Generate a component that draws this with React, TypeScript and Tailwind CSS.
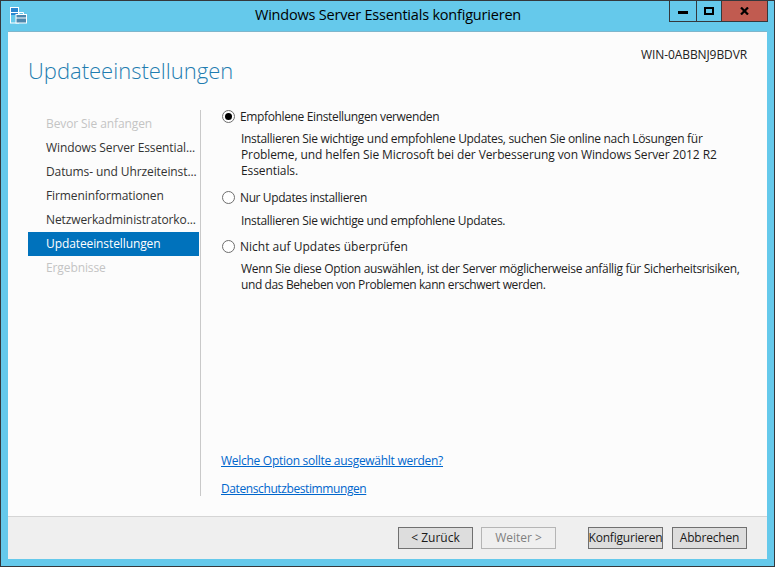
const font = { fontFamily: '"Open Sans", "Noto Sans", sans-serif' };

const schritte = [
  { name: 'Bevor Sie anfangen', status: 'aus' },
  { name: 'Windows Server Essential...', status: 'an' },
  { name: 'Datums- und Uhrzeiteinst...', status: 'an' },
  { name: 'Firmeninformationen', status: 'an' },
  { name: 'Netzwerkadministratorko...', status: 'an' },
  { name: 'Updateeinstellungen', status: 'aktiv' },
  { name: 'Ergebnisse', status: 'aus' },
];

function Radio({ checked }: { checked?: boolean }) {
  return (
    <span className="w-[13px] h-[13px] rounded-full border border-[#6e6e6e] bg-white flex items-center justify-center shrink-0">
      {checked && <span className="w-[7px] h-[7px] rounded-full bg-black" />}
    </span>
  );
}

function Knopf({ children, disabled, className }: { children: React.ReactNode; disabled?: boolean; className?: string }) {
  return (
    <button
      className={`h-[22px] w-[75px] flex items-center justify-center border text-[12px] whitespace-nowrap ${
        disabled ? 'border-[#b5b5b5] bg-[#efefef] text-[#7f7f7f]' : 'border-[#707070] bg-[#dddddd] text-[#1a1a1a]'
      } ${className ?? ''}`}
    >
      {children}
    </button>
  );
}

export default function App() {
  return (
    <div style={font} className="w-[775px] h-[567px] flex flex-col bg-[#65c9eb] border border-[#34383c] text-[12px] text-[#1e1e1e] overflow-hidden">
      {/* Titelleiste */}
      <div className="h-[30px] flex shrink-0">
        <div className="w-[30px] pl-[9px] pt-[6px]">
          <svg width="17" height="17" viewBox="0 0 17 17">
            <rect x="0.5" y="0.5" width="8" height="15.5" fill="#65c9eb" stroke="#fff" />
            <rect x="1" y="1" width="7" height="4" fill="#2a86d0" />
            <rect x="1" y="5" width="7" height="1" fill="#fff" />
            <rect x="1" y="6" width="7" height="2" fill="#2a86d0" />
            <rect x="6" y="7.5" width="10.5" height="8.5" fill="#4d87ad" stroke="#fff" />
            <path d="M9 7.5V5.5H13.5V7.5" fill="none" stroke="#fff" />
            <path d="M6 11H16.5" stroke="#fff" />
          </svg>
        </div>
        <div className="flex-1 flex justify-center pt-[4px] pl-[76px] text-[14.5px] leading-[20px] text-black tracking-[-0.2px] whitespace-nowrap">
          Windows Server Essentials konfigurieren
        </div>
        <div className="h-[21px] flex border border-t-0 border-[#34383c] mr-[6px]">
          <div className="w-[27px] flex items-center justify-center border-r border-[#34383c]">
            <span className="w-[10px] h-[3px] bg-black mt-[3px]" />
          </div>
          <div className="w-[25px] flex items-center justify-center border-r border-[#34383c]">
            <span className="w-[10px] h-[8px] border-2 border-black" />
          </div>
          <div className="w-[45px] flex items-center justify-center bg-[#c15b50]">
            <svg width="9" height="8" viewBox="0 0 9 8">
              <path d="M1 0.5L8 7.5M8 0.5L1 7.5" stroke="#000" strokeWidth="2.2" fill="none" />
            </svg>
          </div>
        </div>
      </div>

      {/* Fensterinhalt */}
      <div className="flex-1 mx-[7px] mb-[7px] flex flex-col min-h-0 border-t border-[#7fb6cc]">
        <div className="flex-1 bg-[#fcfcfc] flex flex-col min-h-0">
          <div className="h-[78px] shrink-0 flex justify-between pl-[20px] pr-[20px]">
            <h1 className="text-[22px] leading-[32px] mt-[22px] font-light text-[#1f7cb0]">Updateeinstellungen</h1>
            <div className="text-[12px] leading-[16px] mt-[15px] tracking-[-0.1px] text-[#222]">WIN-0ABBNJ9BDVR</div>
          </div>
          <div className="flex-1 flex pl-[20px] pb-[20px] min-h-0">
            <nav className="w-[171px] shrink-0 pt-[2px]">
              {schritte.map((s) => (
                <div
                  key={s.name}
                  className={`h-[24px] flex items-center pl-[18px] whitespace-nowrap tracking-[-0.1px] ${
                    s.status === 'aktiv' ? 'bg-[#0072bc] text-white' : s.status === 'aus' ? 'text-[#c4c4c4]' : 'text-[#333]'
                  }`}
                >
                  {s.name}
                </div>
              ))}
            </nav>
            <div className="w-px bg-[#c9c9c9] ml-[1px] shrink-0" />
            <main className="flex-1 pl-[20px] flex flex-col -mt-[2px] -mb-[1px]">
              <div className="flex items-center gap-[5px] h-[17px] pl-[1px] tracking-[-0.36px]">
                <Radio checked />
                <span className="whitespace-nowrap">Empfohlene Einstellungen verwenden</span>
              </div>
              <div className="ml-[20px] mt-[6px] leading-[16px] whitespace-nowrap">
                <div className="tracking-[-0.31px]">Installieren Sie wichtige und empfohlene Updates, suchen Sie online nach Lösungen für</div>
                <div className="tracking-[-0.1px]">Probleme, und helfen Sie Microsoft bei der Verbesserung von Windows Server 2012 R2</div>
                <div className="tracking-[-0.1px]">Essentials.</div>
              </div>

              <div className="flex items-center gap-[5px] h-[17px] pl-[1px] mt-[10px] tracking-[-0.39px]">
                <Radio />
                <span className="whitespace-nowrap">Nur Updates installieren</span>
              </div>
              <div className="ml-[20px] mt-[7px] leading-[16px] whitespace-nowrap tracking-[-0.32px]">
                Installieren Sie wichtige und empfohlene Updates.
              </div>

              <div className="flex items-center gap-[5px] h-[17px] pl-[1px] mt-[9px]">
                <Radio />
                <span className="whitespace-nowrap">Nicht auf Updates überprüfen</span>
              </div>
              <div className="ml-[20px] mt-[6px] leading-[16px] whitespace-nowrap">
                <div className="tracking-[-0.31px]">Wenn Sie diese Option auswählen, ist der Server möglicherweise anfällig für Sicherheitsrisiken,</div>
                <div className="tracking-[-0.39px]">und das Beheben von Problemen kann erschwert werden.</div>
              </div>

              <div className="mt-auto flex flex-col gap-[12px] leading-[16px] text-[#0066cc]">
                <a className="underline tracking-[-0.28px]">Welche Option sollte ausgewählt werden?</a>
                <a className="underline tracking-[-0.4px]">Datenschutzbestimmungen</a>
              </div>
            </main>
          </div>
        </div>
        <div className="h-[43px] shrink-0 bg-[#efefef] border-t border-[#d5d5d5] flex items-center justify-end pr-[20px]">
          <Knopf>&lt; Zurück</Knopf>
          <Knopf disabled className="ml-[8px]">Weiter &gt;</Knopf>
          <Knopf className="ml-[32px] tracking-[-0.2px]">Konfigurieren</Knopf>
          <Knopf className="ml-[9px] tracking-[-0.2px]">Abbrechen</Knopf>
        </div>
      </div>
    </div>
  );
}
